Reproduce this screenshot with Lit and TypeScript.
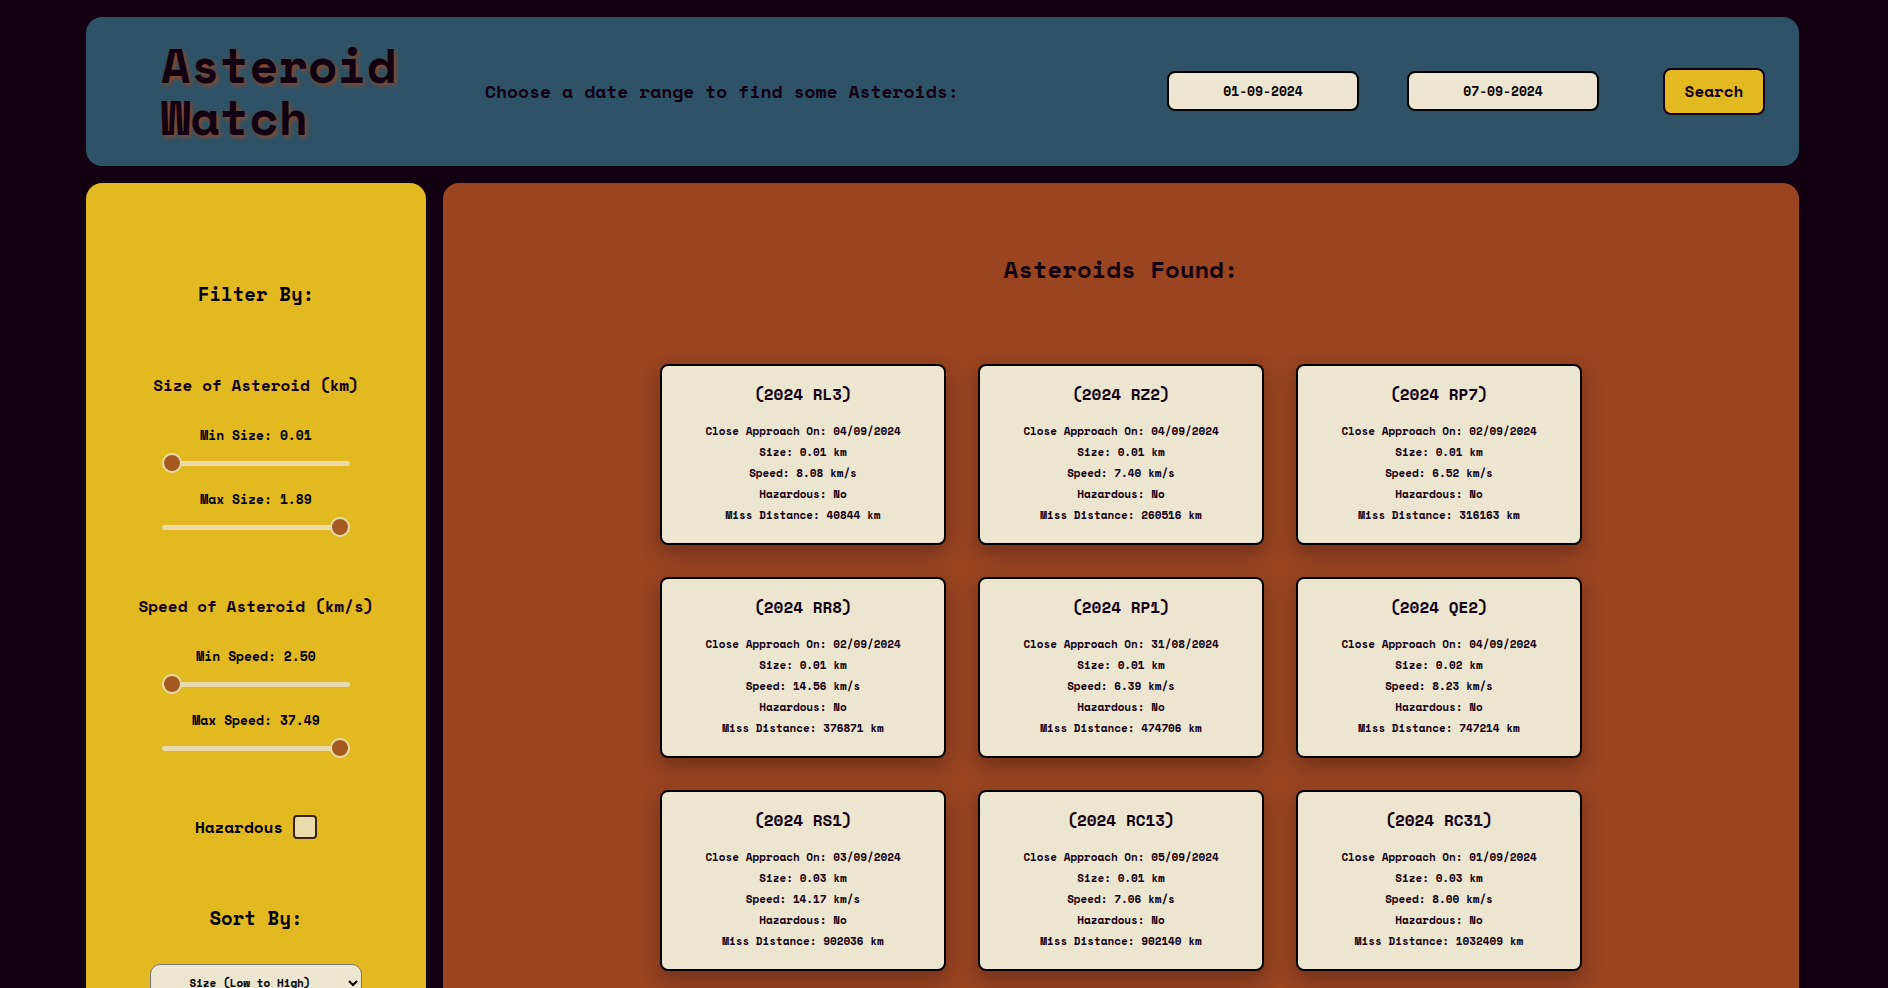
import { LitElement, html, css } from "lit";
import { customElement, property, state } from "lit/decorators.js";

interface Asteroid {
  name: string;
  approach: string;
  size: string;
  speed: string;
  hazardous: boolean;
  miss: number;
}

const ASTEROIDS: Asteroid[] = [
  { name: "(2024 RL3)", approach: "04/09/2024", size: "0.01", speed: "8.08", hazardous: false, miss: 40844 },
  { name: "(2024 RZ2)", approach: "04/09/2024", size: "0.01", speed: "7.40", hazardous: false, miss: 260516 },
  { name: "(2024 RP7)", approach: "02/09/2024", size: "0.01", speed: "6.52", hazardous: false, miss: 316163 },
  { name: "(2024 RR8)", approach: "02/09/2024", size: "0.01", speed: "14.56", hazardous: false, miss: 376871 },
  { name: "(2024 RP1)", approach: "31/08/2024", size: "0.01", speed: "6.39", hazardous: false, miss: 474706 },
  { name: "(2024 QE2)", approach: "04/09/2024", size: "0.02", speed: "8.23", hazardous: false, miss: 747214 },
  { name: "(2024 RS1)", approach: "03/09/2024", size: "0.03", speed: "14.17", hazardous: false, miss: 902036 },
  { name: "(2024 RC13)", approach: "05/09/2024", size: "0.01", speed: "7.06", hazardous: false, miss: 902140 },
  { name: "(2024 RC31)", approach: "01/09/2024", size: "0.03", speed: "8.00", hazardous: false, miss: 1032409 },
];

@customElement("asteroid-card")
class AsteroidCard extends LitElement {
  @property({ attribute: false }) asteroid!: Asteroid;

  static styles = css`
    :host {
      display: block;
      box-sizing: border-box;
      padding: 16px 16px 17px;
      border: 2px solid #000;
      border-radius: 8px;
      background: #ece5cf;
      color: #120012;
      text-align: center;
      box-shadow: 0 8px 20px rgba(18, 0, 18, 0.3);
    }
    .name {
      margin: 0 0 15px;
      font-size: 16px;
      line-height: 24px;
    }
    .fact {
      margin: 0;
      font-size: 11px;
      line-height: 21px;
    }
  `;

  render() {
    const a = this.asteroid;
    return html`
      <h3 class="name">${a.name}</h3>
      <p class="fact">Close Approach On: ${a.approach}</p>
      <p class="fact">Size: ${a.size} km</p>
      <p class="fact">Speed: ${a.speed} km/s</p>
      <p class="fact">Hazardous: ${a.hazardous ? "Yes" : "No"}</p>
      <p class="fact">Miss Distance: ${a.miss} km</p>
    `;
  }
}

@customElement("range-field")
class RangeField extends LitElement {
  @property() label = "";
  @property({ type: Number }) min = 0;
  @property({ type: Number }) max = 1;
  @property({ type: Number }) value = 0;

  static styles = css`
    :host {
      display: flex;
      flex-direction: column;
      align-items: center;
      gap: 8px;
      width: 100%;
    }
    .label {
      font-size: 13px;
      line-height: 20px;
    }
    .slider {
      appearance: none;
      display: block;
      width: 188px;
      max-width: 100%;
      height: 20px;
      margin: 0;
      background: transparent;
    }
    .slider::-webkit-slider-runnable-track {
      height: 5px;
      border-radius: 5px;
      background: #e9dbac;
    }
    .slider::-webkit-slider-thumb {
      appearance: none;
      box-sizing: border-box;
      width: 20px;
      height: 20px;
      margin-top: -8px;
      border: 2px solid #e9dbac;
      border-radius: 50%;
      background: #a65a20;
    }
  `;

  private onInput(e: Event) {
    this.value = Number((e.target as HTMLInputElement).value);
  }

  render() {
    return html`
      <label class="label" for="slider">${this.label}: ${this.value.toFixed(2)}</label>
      <input
        class="slider"
        id="slider"
        type="range"
        step="0.01"
        min=${this.min}
        max=${this.max}
        .value=${String(this.value)}
        @input=${this.onInput}
      />
    `;
  }
}

@customElement("app-root")
class AppRoot extends LitElement {
  @state() private from = "01-09-2024";
  @state() private to = "07-09-2024";

  static styles = css`
    :host {
      display: flex;
      flex-direction: column;
      gap: 17px;
      box-sizing: border-box;
      min-height: 100vh;
      padding: 17px 89px 17px 86px;
      background: #120012;
      color: #000;
      font-family: "Space Mono", "Liberation Mono", monospace;
      font-weight: 700;
    }
    .header {
      display: flex;
      align-items: center;
      padding: 22px 34px 23px 75px;
      border-radius: 16px;
      background: #2e5366;
      color: #120012;
    }
    .title {
      width: 324px;
      margin: 0;
      font-size: 48px;
      line-height: 52px;
      text-shadow: 2px 2px 4px #9a4420;
    }
    .title-text {
      display: block;
      width: min-content;
    }
    .prompt {
      margin: 0;
      font-size: 18px;
      line-height: 24px;
    }
    .search {
      display: flex;
      align-items: center;
      gap: 48px;
      margin-left: auto;
    }
    .date {
      box-sizing: border-box;
      width: 192px;
      height: 40px;
      padding: 0 8px;
      border: 2px solid #000;
      border-radius: 8px;
      background: #ece5cf;
      color: #000;
      font: inherit;
      font-size: 13px;
      text-align: center;
    }
    .submit {
      box-sizing: border-box;
      height: 47px;
      margin-left: 16px;
      padding: 0 16px;
      min-width: 102px;
      border: 2px solid #120012;
      border-radius: 8px;
      background: #e3b922;
      color: #120012;
      font: inherit;
      font-size: 16px;
    }
    .body {
      flex: 1;
      display: grid;
      grid-template-columns: 340px minmax(0, 1fr);
      gap: 17px;
    }
    .sidebar {
      display: flex;
      flex-direction: column;
      align-items: center;
      padding: 96px 16px 64px;
      border-radius: 16px;
      background: #e3b922;
    }
    .side-title {
      margin: 0;
      font-size: 19px;
      line-height: 30px;
    }
    .filters {
      display: flex;
      flex-direction: column;
      align-items: center;
      gap: 57px;
      width: 100%;
      margin: 64px 0;
    }
    .group {
      display: flex;
      flex-direction: column;
      align-items: center;
      gap: 16px;
      width: 100%;
    }
    .group-title {
      margin: 0 0 12px;
      color: #120012;
      font-size: 16px;
      line-height: 24px;
    }
    .hazard {
      display: flex;
      align-items: center;
      gap: 10px;
      font-size: 16px;
      line-height: 24px;
    }
    .box {
      appearance: none;
      box-sizing: border-box;
      width: 24px;
      height: 24px;
      margin: 0;
      border: 2px solid #3a2418;
      border-radius: 4px;
      background: #e9dbac;
    }
    .box:checked {
      background: #a65a20;
    }
    .sort {
      box-sizing: border-box;
      width: 212px;
      max-width: 100%;
      height: 38px;
      margin-top: 31px;
      border: 1px solid #767676;
      border-radius: 10px;
      background: #ece5cf;
      color: #000;
      font: inherit;
      font-size: 11px;
      text-align: center;
    }
    .results {
      padding: 68px 32px 64px;
      border-radius: 16px;
      background: #9a4420;
    }
    .results-title {
      margin: 0 0 77px;
      color: #120012;
      font-size: 24px;
      line-height: 36px;
      text-align: center;
    }
    .cards {
      display: grid;
      grid-template-columns: repeat(3, minmax(0, 286px));
      justify-content: center;
      gap: 32px;
    }
  `;

  private search(e: Event) {
    e.preventDefault();
  }

  render() {
    return html`
      <header class="header">
        <h1 class="title"><span class="title-text">Asteroid Watch</span></h1>
        <h2 class="prompt">Choose a date range to find some Asteroids:</h2>
        <form class="search" @submit=${this.search}>
          <input class="date" type="text" aria-label="Start date" .value=${this.from} />
          <input class="date" type="text" aria-label="End date" .value=${this.to} />
          <button class="submit" type="submit">Search</button>
        </form>
      </header>
      <div class="body">
        <aside class="sidebar">
          <h2 class="side-title">Filter By:</h2>
          <div class="filters">
            <section class="group">
              <h3 class="group-title">Size of Asteroid (km)</h3>
              <range-field label="Min Size" min="0.01" max="1.89" value="0.01"></range-field>
              <range-field label="Max Size" min="0.01" max="1.89" value="1.89"></range-field>
            </section>
            <section class="group">
              <h3 class="group-title">Speed of Asteroid (km/s)</h3>
              <range-field label="Min Speed" min="2.5" max="37.49" value="2.5"></range-field>
              <range-field label="Max Speed" min="2.5" max="37.49" value="37.49"></range-field>
            </section>
            <label class="hazard">Hazardous <input class="box" type="checkbox" /></label>
          </div>
          <label class="side-title" for="sort">Sort By:</label>
          <select class="sort" id="sort">
            <option>Size (Low to High)</option>
            <option>Size (High to Low)</option>
            <option>Speed (Low to High)</option>
            <option>Speed (High to Low)</option>
          </select>
        </aside>
        <main class="results">
          <h2 class="results-title">Asteroids Found:</h2>
          <div class="cards">
            ${ASTEROIDS.map((a) => html`<asteroid-card .asteroid=${a}></asteroid-card>`)}
          </div>
        </main>
      </div>
    `;
  }
}
